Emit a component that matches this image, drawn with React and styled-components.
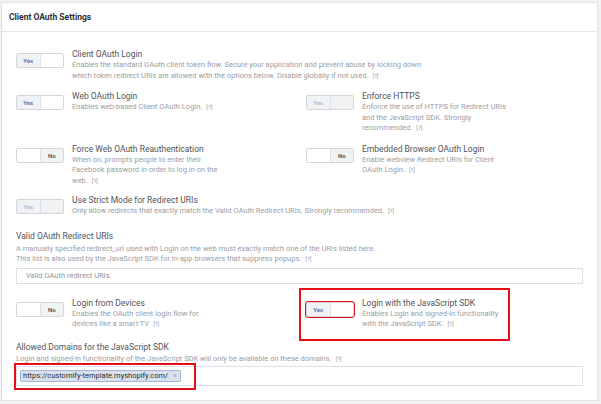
import React from 'react';
import styled, { createGlobalStyle, css } from 'styled-components';

const GlobalStyle = createGlobalStyle`
  html, body {
    margin: 0;
    padding: 0;
    background: #f1f1f1;
    font-family: Roboto, "Liberation Sans", Arial, sans-serif;
  }
`;

const Page = styled.div`
  width: 601px;
  height: 404px;
  padding: 2px 3px 0 1px;
  box-sizing: border-box;
`;

const Card = styled.section`
  background: #fff;
  border: 1px solid #e2e2e2;
  box-sizing: border-box;
  width: 597px;
  height: 399px;
  display: flex;
  flex-direction: column;
`;

const CardHeader = styled.header`
  height: 28px;
  flex: none;
  display: flex;
  align-items: center;
  padding-left: 7px;
  border-bottom: 1px solid #e6e6e6;
  font-size: 8.5px;
  font-weight: 700;
  color: #2b2f36;
`;

const Body = styled.div`
  padding: 17px 14px 0 14px;
  display: flex;
  flex-direction: column;
`;

const Row = styled.div`
  display: grid;
  grid-template-columns: 290px 1fr;
  margin-top: ${p => p.$gap || 0}px;
`;

const Setting = styled.div`
  display: flex;
  align-items: flex-start;
  position: relative;
  ${p => p.$highlight && css`
    &::after {
      content: '';
      position: absolute;
      left: -7px;
      top: -10px;
      width: 207px;
      bottom: -11px;
      border: 2px solid #e3101a;
      pointer-events: none;
    }
  `}
`;

const ToggleBox = styled.div`
  flex: none;
  width: 48px;
  height: 15px;
  margin-top: 4px;
  box-sizing: border-box;
  border: 1px solid #d3d6db;
  border-radius: 2px;
  display: flex;
  ${p => p.$highlight && css`
    outline: 1.5px solid #e3101a;
    outline-offset: 0.5px;
  `}
`;

const Half = styled.span`
  flex: 1;
  display: flex;
  align-items: center;
  justify-content: center;
  font-size: 6px;
  font-weight: 700;
  background: ${p => (p.$active ? '#f1f2f4' : '#fff')};
  color: ${p => (p.$dim ? '#a9bcdc' : p.$yes ? '#5677c4' : '#555a61')};
  & + & {
    border-left: 1px solid #e0e2e6;
  }
`;

const Text = styled.div`
  margin-left: 8px;
`;

const Title = styled.div`
  font-size: 8.5px;
  line-height: 11px;
  color: #50545b;
  white-space: nowrap;
`;

const Desc = styled.div`
  font-size: 7.5px;
  line-height: 10.5px;
  color: #9a9ea5;
  white-space: nowrap;
`;

const Help = styled.span`
  font-size: 6px;
  margin-left: 4px;
  color: #9a9ea5;
`;

const Heading = styled.div`
  font-size: 8.5px;
  line-height: 11px;
  color: #50545b;
  margin-top: ${p => p.$gap || 0}px;
`;

const HeadingDesc = styled(Desc)`
  line-height: 10px;
  margin-top: ${p => p.$gap || 0}px;
`;

const Field = styled.div`
  margin-top: ${p => p.$gap || 0}px;
  height: ${p => p.$h}px;
  box-sizing: border-box;
  border: 1px solid #dddfe2;
  display: flex;
  align-items: center;
  padding-left: ${p => p.$pad}px;
  font-size: 7.5px;
  color: #90949c;
`;

const Tag = styled.span`
  position: relative;
  display: inline-flex;
  align-items: center;
  height: 12px;
  box-sizing: border-box;
  padding: 0 3px 0 2px;
  background: #d9e1ee;
  border: 1px solid #a3b6d8;
  border-radius: 2px;
  font-size: 7.5px;
  color: #2b2f36;
  &::after {
    content: '';
    position: absolute;
    left: -7px;
    top: -8px;
    right: -16px;
    bottom: -9px;
    border: 2px solid #e3101a;
    pointer-events: none;
  }
`;

const TagClose = styled.span`
  margin-left: 5px;
  color: #a0a4ab;
  font-size: 7px;
`;

const Toggle = ({ on, dim, highlight }) => (
  <ToggleBox $highlight={highlight}>
    {on ? (
      <>
        <Half $active $yes $dim={dim}>Yes</Half>
        <Half $active={dim} />
      </>
    ) : (
      <>
        <Half />
        <Half $active>No</Half>
      </>
    )}
  </ToggleBox>
);

const Item = ({ on, dim, title, lines, highlight }) => (
  <Setting $highlight={highlight}>
    <Toggle on={on} dim={dim} highlight={highlight} />
    <Text>
      <Title>{title}</Title>
      {lines.map((l, i) => (
        <Desc key={i}>
          {l}
          {i === lines.length - 1 && <Help>[?]</Help>}
        </Desc>
      ))}
    </Text>
  </Setting>
);

export default function App() {
  return (
    <Page>
      <GlobalStyle />
      <Card>
        <CardHeader>Client OAuth Settings</CardHeader>
        <Body>
          <Item
            on
            title="Client OAuth Login"
            lines={[
              'Enables the standard OAuth client token flow. Secure your application and prevent abuse by locking down',
              'which token redirect URIs are allowed with the options below. Disable globally if not used.',
            ]}
          />
          <Row $gap={10}>
            <Item on title="Web OAuth Login" lines={['Enables web-based Client OAuth Login.']} />
            <Item
              on
              dim
              title="Enforce HTTPS"
              lines={[
                'Enforce the use of HTTPS for Redirect URIs',
                'and the JavaScript SDK. Strongly',
                'recommended.',
              ]}
            />
          </Row>
          <Row $gap={10}>
            <Item
              title="Force Web OAuth Reauthentication"
              lines={[
                'When on, prompts people to enter their',
                'Facebook password in order to log in on the',
                'web.',
              ]}
            />
            <Item
              title="Embedded Browser OAuth Login"
              lines={['Enable webview Redirect URIs for Client', 'OAuth Login.']}
            />
          </Row>
          <Row $gap={9}>
            <Item
              on
              dim
              title="Use Strict Mode for Redirect URIs"
              lines={['Only allow redirects that exactly match the Valid OAuth Redirect URIs. Strongly recommended.']}
            />
          </Row>
          <Heading $gap={14}>Valid OAuth Redirect URIs</Heading>
          <HeadingDesc $gap={2}>
            A manually specified redirect_uri used with Login on the web must exactly match one of the URIs listed here.
            <br />
            This list is also used by the JavaScript SDK for in-app browsers that suppress popups.
            <Help>[?]</Help>
          </HeadingDesc>
          <Field $gap={4} $h={16} $pad={9}>
            Valid OAuth redirect URIs.
          </Field>
          <Row $gap={14}>
            <Item
              title="Login from Devices"
              lines={['Enables the OAuth client login flow for', 'devices like a smart TV']}
            />
            <Item
              on
              highlight
              title="Login with the JavaScript SDK"
              lines={['Enables Login and signed-in functionality', 'with the JavaScript SDK.']}
            />
          </Row>
          <Heading $gap={12}>Allowed Domains for the JavaScript SDK</Heading>
          <HeadingDesc $gap={1}>
            Login and signed-in functionality of the JavaScript SDK will only be available on these domains.
            <Help>[?]</Help>
          </HeadingDesc>
          <Field $gap={2} $h={20} $pad={3}>
            <Tag>
              https://customify-template.myshopify.com/
              <TagClose>×</TagClose>
            </Tag>
          </Field>
        </Body>
      </Card>
    </Page>
  );
}
